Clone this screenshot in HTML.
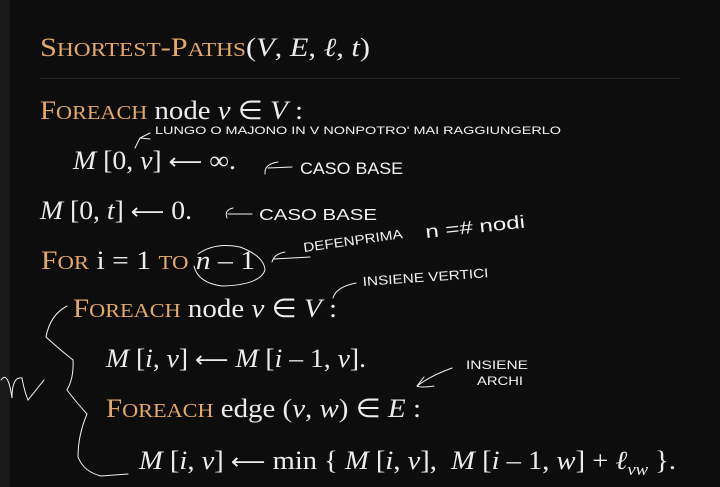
<!DOCTYPE html>
<html><head><meta charset="utf-8"><style>
html,body{margin:0;padding:0;}
body{width:720px;height:487px;background:#0d0d0d;position:relative;overflow:hidden;font-family:"Liberation Serif",serif;color:#ececec;}
.strip{position:absolute;left:0;top:0;width:10px;height:487px;background:#1b1918;}
.l{position:absolute;font-size:26px;line-height:1;white-space:nowrap;transform-origin:0 0;}
.k{color:#e3a96b;}
.sc{font-size:20px;}
.ar{font-family:"DejaVu Sans",sans-serif;font-size:22px;}
i{font-style:italic;}
.hr{position:absolute;left:40px;top:78px;width:640px;height:1px;background:#222;}
svg{position:absolute;left:0;top:0;}
svg text{font-family:"Liberation Sans",sans-serif;fill:#f2f2f2;}
</style></head><body>
<div class="strip"></div>
<div class="l" style="left:40px;top:35px"><span class="k">S<span class="sc">HORTEST</span>-P<span class="sc">ATHS</span></span>(<i>V</i>, <i>E</i>, <i>ℓ</i>, <i>t</i>)</div>
<div class="hr"></div>
<div class="l" style="left:40px;top:98px"><span class="k">F<span class="sc">OREACH</span></span> node <i>v</i> ∈ <i>V</i> :</div>
<div class="l" style="left:73px;top:148px"><i>M</i> [0, <i>v</i>] <span class="ar">⟵</span> ∞.</div>
<div class="l" style="left:40px;top:198px"><i>M</i> [0, <i>t</i>] <span class="ar">⟵</span> 0.</div>
<div class="l" style="left:41px;top:248px"><span class="k">F<span class="sc">OR</span></span> i = 1 <span class="k sc">TO</span> <i>n</i> – 1</div>
<div class="l" style="left:73px;top:296px"><span class="k">F<span class="sc">OREACH</span></span> node <i>v</i> ∈ <i>V</i> :</div>
<div class="l" style="left:106px;top:346px"><i>M</i> [<i>i</i>, <i>v</i>] <span class="ar">⟵</span> <i>M</i> [<i>i</i> – 1, <i>v</i>].</div>
<div class="l" style="left:106px;top:396px"><span class="k">F<span class="sc">OREACH</span></span> edge (<i>v</i>, <i>w</i>) ∈ <i>E</i> :</div>
<div class="l" style="left:139px;top:448px"><i>M</i> [<i>i</i>, <i>v</i>] <span class="ar">⟵</span> min { <i>M</i> [<i>i</i>, <i>v</i>],&nbsp; <i>M</i> [<i>i</i> – 1, <i>w</i>] + <i>ℓ</i><sub style="font-size:17px"><i>vw</i></sub> }.</div>
<svg width="720" height="487" fill="none" stroke="#f2f2f2" stroke-width="1" stroke-linecap="round">
<path d="M150 133 L140 138 L135 148 M140 138 L150 139"/>
<text x="155" y="134" stroke="none" style="font-size:11px" textLength="406" lengthAdjust="spacingAndGlyphs">LUNGO O MAJONO IN V NONPOTRO' MAI RAGGIUNGERLO</text>
<path d="M278 162 Q264 164 265 174 M268 168 L292 167"/>
<text x="300" y="174" stroke="none" style="font-size:17px" textLength="103" lengthAdjust="spacingAndGlyphs">CASO BASE</text>
<path d="M233 208 Q224 210 227 218 M228 214 L252 214"/>
<text x="259" y="220" stroke="none" style="font-size:16px" textLength="118" lengthAdjust="spacingAndGlyphs">CASO BASE</text>
<path d="M198 254 Q215 242 240 247 Q264 256 265 270 Q260 285 222 286 Q198 283 194 266"/>
<path d="M285 252 Q274 254 272 262 M274 259 L310 257"/>
<text x="304" y="252" stroke="none" transform="rotate(-8 304 252)" style="font-size:13px" textLength="100" lengthAdjust="spacingAndGlyphs">DEFENPRIMA</text>
<text x="426" y="238" stroke="none" style="font-size:18px" transform="rotate(-6 426 238)" textLength="100" lengthAdjust="spacingAndGlyphs">n =# nodi</text>
<path d="M333 298 Q336 287 356 283"/>
<text x="363" y="286" stroke="none" transform="rotate(-4 363 286)" style="font-size:13px" textLength="126" lengthAdjust="spacingAndGlyphs">INSIENE VERTICI</text>
<path d="M67 306 Q50 315 46 337 Q58 348 73 360 Q74 378 67 390 Q76 402 87 414 Q78 435 78 457 Q84 472 101 476 L128 474"/>
<path d="M1 380 Q8 370 12 398 Q12 376 22 378 Q24 390 28 400 Q36 390 44 380"/>
<path d="M452 368 Q430 376 417 386 Q420 388 434 386 M417 386 L424 377"/>
<text x="466" y="369" stroke="none" style="font-size:12px" textLength="62" lengthAdjust="spacingAndGlyphs">INSIENE</text>
<text x="477" y="385" stroke="none" style="font-size:12px" textLength="46" lengthAdjust="spacingAndGlyphs">ARCHI</text>
</svg>
<script>
var t=[370,303,236,192,255,337,366,421,676];
var ls=document.querySelectorAll('.l');
ls.forEach(function(e,i){var w=e.getBoundingClientRect().width;var L=parseFloat(e.style.left);var s=(t[i]-L)/w;e.style.transform='scaleX('+s+')';});
</script>
</body></html>
